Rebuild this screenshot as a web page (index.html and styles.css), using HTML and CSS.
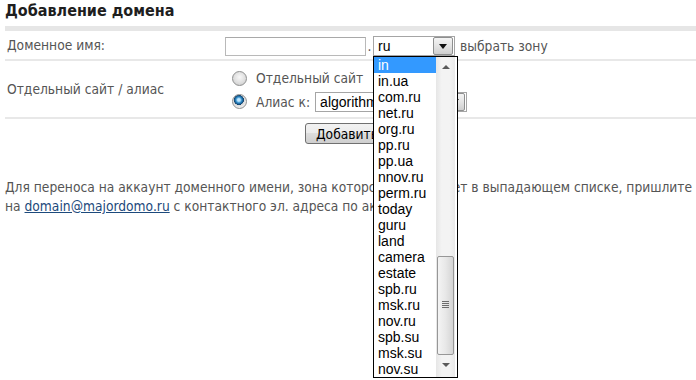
FILE: index.html
```html
<!DOCTYPE html>
<html lang="ru">
<head>
    <meta charset="UTF-8">
    <title>Добавление домена</title>
    <link rel="stylesheet" href="styles.css">
</head>
<body>
    <div class="page">
        <h1 class="title">Добавление домена</h1>
        <div class="bar"></div>

        <div class="row row-domain">
            <div class="label">Доменное имя:</div>
            <div class="field">
                <span class="text-input"></span>
                <span class="dot">.</span>
                <div class="zone">
                    <div class="select select-zone">
                        <span class="select-value">ru</span>
                        <span class="select-btn"><span class="arrow-down"></span></span>
                    </div>
                    <div class="zone-list">
                        <ul class="zone-items">
                            <li class="selected">in</li>
                            <li>in.ua</li>
                            <li>com.ru</li>
                            <li>net.ru</li>
                            <li>org.ru</li>
                            <li>pp.ru</li>
                            <li>pp.ua</li>
                            <li>nnov.ru</li>
                            <li>perm.ru</li>
                            <li>today</li>
                            <li>guru</li>
                            <li>land</li>
                            <li>camera</li>
                            <li>estate</li>
                            <li>spb.ru</li>
                            <li>msk.ru</li>
                            <li>nov.ru</li>
                            <li>spb.su</li>
                            <li>msk.su</li>
                            <li>nov.su</li>
                        </ul>
                        <div class="scroll">
                            <span class="scroll-up"></span>
                            <span class="scroll-thumb"><span class="grip"></span></span>
                            <span class="scroll-down"></span>
                        </div>
                    </div>
                </div>
                <span class="hint">выбрать зону</span>
            </div>
        </div>

        <div class="row row-type">
            <div class="label">Отдельный сайт / алиас</div>
            <div class="choices">
                <label class="choice">
                    <span class="radio"></span>
                    <span>Отдельный сайт</span>
                </label>
                <label class="choice">
                    <span class="radio checked"></span>
                    <span>Алиас к:</span>
                    <span class="select select-alias">
                        <span class="select-value">algorithmics.ru</span>
                        <span class="select-btn"><span class="arrow-down"></span></span>
                    </span>
                </label>
            </div>
        </div>

        <div class="submit-row">
            <button class="btn">Добавить</button>
        </div>

        <p class="note">
            Для переноса на аккаунт доменного имени, зона которой отсутствует в выпадающем списке, пришлите<br>
            на <a href="#">domain@majordomo.ru</a> с контактного эл. адреса по аккаунту.
        </p>
    </div>
</body>
</html>
```

FILE: styles.css
```css
body { margin: 0; background: #fff; color: #555; font-family: "DejaVu Sans Condensed", "DejaVu Sans", sans-serif; font-size: 13.7px; }
.page { height: 380px; padding-left: 5px; overflow: hidden; }

.title { margin: 0; height: 26px; padding-top: 2px; box-sizing: border-box; font-size: 16px; line-height: 18px; font-weight: bold; color: #1e1e1e; }
.bar { height: 5px; background: #e6e6e6; }

.row { display: grid; grid-template-columns: 220px 1fr; align-items: center; border-bottom: 2px solid #e8e8e8; }
.row-domain { height: 28px; }
.row-type { height: 56px; }
.label { padding-left: 2px; }
.field { display: flex; align-items: center; padding-top: 2px; }

.text-input { display: block; width: 139px; height: 17px; border: 1px solid #b9b9b9; border-top-color: #a9a9a9; background: #fff; }
.dot { width: 7px; text-align: center; }

.select { display: flex; align-items: center; height: 20px; box-sizing: border-box; border: 1px solid #a5a5a5; background: #fff; color: #000; font-family: "Liberation Sans", Arial, sans-serif; font-size: 14px; }
.select-value { flex: 1; padding-left: 4px; overflow: hidden; white-space: nowrap; }
.select-btn { display: flex; align-items: center; justify-content: center; width: 18px; height: 16px; margin-right: 1px; border: 1px solid #8e8f8f; border-radius: 2px; background: linear-gradient(#f4f4f4, #e4e4e4 50%, #cfcfcf); }
.arrow-down { width: 0; height: 0; border-left: 4px solid transparent; border-right: 4px solid transparent; border-top: 5px solid #111; }

.zone { position: relative; }
.select-zone { width: 82px; }
.hint { margin-left: 5px; }

.zone-list { position: absolute; top: 20px; left: 0; z-index: 5; display: flex; width: 83px; border: 1px solid #000; background: #fff; font-family: "Liberation Sans", Arial, sans-serif; font-size: 14px; color: #000; }
.zone-items { margin: 0; padding: 0; list-style: none; width: 62px; }
.zone-items li { height: 16px; line-height: 16px; padding-left: 4px; }
.zone-items li.selected { background: #3399ff; color: #fff; }

.scroll { position: relative; width: 19px; background: linear-gradient(90deg, #e6e6e6, #f3f3f3 30%, #f3f3f3 70%, #e9e9e9); }
.scroll-up, .scroll-down { position: absolute; left: 6px; width: 0; height: 0; border-left: 4px solid transparent; border-right: 4px solid transparent; }
.scroll-up { top: 8px; border-bottom: 4px solid #5a5a5a; }
.scroll-down { bottom: 10px; border-top: 4px solid #5a5a5a; }
.scroll-thumb { position: absolute; top: 199px; left: 1px; width: 15px; height: 97px; border: 1px solid #979797; border-radius: 2px; background: linear-gradient(90deg, #f4f4f4, #e8e8e8 50%, #d5d5d5); }
.grip { position: absolute; top: 44px; left: 4px; width: 7px; height: 7px; background: repeating-linear-gradient(#6d6d6d 0 1px, transparent 1px 2px); }

.choices { display: flex; flex-direction: column; gap: 4px; padding: 8px 0 5px 7px; }
.choice { display: flex; align-items: center; gap: 9px; }
.choice:first-child { height: 18px; }
.choice:last-child { height: 21px; }
.radio { width: 13px; height: 13px; border-radius: 50%; border: 1px solid #8e8f8f; background: radial-gradient(circle at 50% 40%, #f8f8f8, #dcdcdc 60%, #c3c3c3); }
.radio.checked { background: radial-gradient(circle at 45% 38%, #bfe6ff 0 12%, #2d8ac7 28%, #0f3f6a 45%, #d9d9d9 48%, #ececec 70%, #c8c8c8); }
.select-alias { width: 152px; margin-left: -4px; }

.submit-row { padding: 4px 0 0 300px; }
.btn { height: 21px; padding: 0 10px; border: 1px solid #707070; border-radius: 3px; background: linear-gradient(#f2f2f2, #ebebeb 50%, #dddddd 50%, #cfcfcf); color: #000; font-family: "DejaVu Sans Condensed", "DejaVu Sans", sans-serif; font-size: 13.7px; }

.note { margin: 34px 0 0; line-height: 19px; white-space: nowrap; }
.note a { color: #1d4a7c; }
```
